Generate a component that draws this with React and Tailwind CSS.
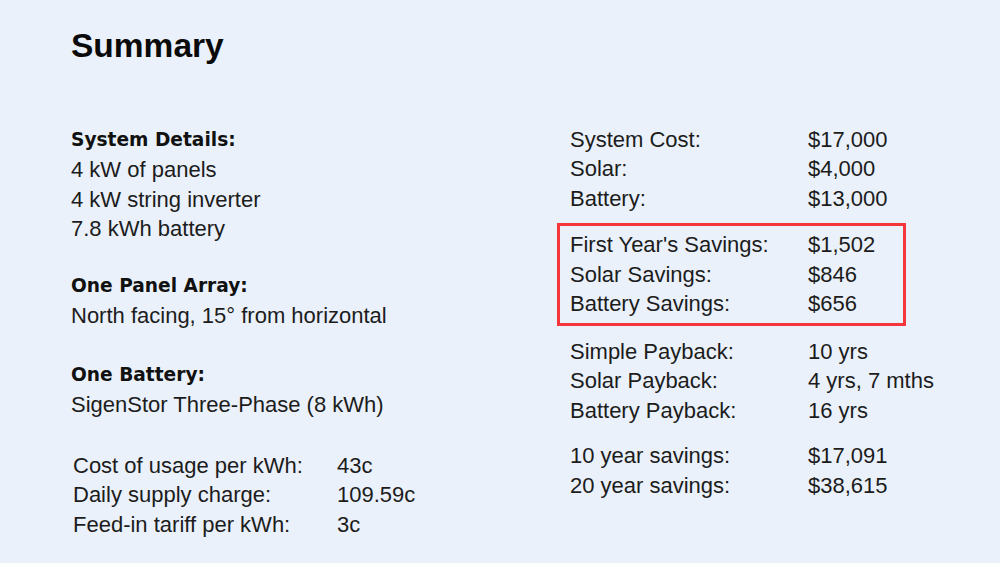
import React from "react";

const body = { fontFamily: '"Liberation Sans", Arial, sans-serif' };
const head = { fontFamily: '"DejaVu Sans", Verdana, sans-serif' };

function Row({ label, value, labelW = "w-[238px]" }) {
  return (
    <div className="flex h-[29.5px] items-center whitespace-nowrap">
      <div className={labelW + " shrink-0"}>{label}</div>
      <div>{value}</div>
    </div>
  );
}

function Heading({ children }) {
  return (
    <div className="flex h-[29.5px] items-center text-[18.6px] font-bold text-[#111] whitespace-nowrap" style={head}>
      {children}
    </div>
  );
}

function Line({ children }) {
  return <div className="flex h-[29.5px] items-center whitespace-nowrap">{children}</div>;
}

export default function App() {
  return (
    <div className="w-[1000px] h-[563px] overflow-hidden bg-[#eaf1fa] text-[#1c1c1c] text-[22px]" style={body}>
      <div className="pl-[71px] pt-[29px]">
        <h1 className="text-[33.5px] font-bold leading-none text-[#0a0a0a]" style={body}>Summary</h1>
      </div>
      <div className="flex pt-[62px]">
        <div className="w-[557px] shrink-0 pl-[71px]">
          <div className="mt-[1px]">
            <Heading>System Details:</Heading>
          </div>
          <Line>4 kW of panels</Line>
          <Line>4 kW string inverter</Line>
          <Line>7.8 kWh battery</Line>
          <div className="mt-[28px]">
            <Heading>One Panel Array:</Heading>
            <Line>North facing, 15° from horizontal</Line>
          </div>
          <div className="mt-[30px]">
            <Heading>One Battery:</Heading>
            <Line>SigenStor Three-Phase (8 kWh)</Line>
          </div>
          <div className="mt-[31px] pl-[2px]">
            <Row label="Cost of usage per kWh:" value="43c" labelW="w-[264px]" />
            <Row label="Daily supply charge:" value="109.59c" labelW="w-[264px]" />
            <Row label="Feed-in tariff per kWh:" value="3c" labelW="w-[264px]" />
          </div>
        </div>
        <div className="w-[420px] shrink-0">
          <div className="pl-[13px]">
            <Row label="System Cost:" value="$17,000" />
            <Row label="Solar:" value="$4,000" />
            <Row label="Battery:" value="$13,000" />
          </div>
          <div className="mt-[10px] w-[349px] border-[3px] border-[#f5363a] pl-[10px] pt-[4px] pb-[4px]">
            <Row label="First Year's Savings:" value="$1,502" />
            <Row label="Solar Savings:" value="$846" />
            <Row label="Battery Savings:" value="$656" />
          </div>
          <div className="mt-[11px] pl-[13px]">
            <Row label="Simple Payback:" value="10 yrs" />
            <Row label="Solar Payback:" value="4 yrs, 7 mths" />
            <Row label="Battery Payback:" value="16 yrs" />
          </div>
          <div className="mt-[16px] pl-[13px]">
            <Row label="10 year savings:" value="$17,091" />
            <Row label="20 year savings:" value="$38,615" />
          </div>
        </div>
      </div>
    </div>
  );
}
